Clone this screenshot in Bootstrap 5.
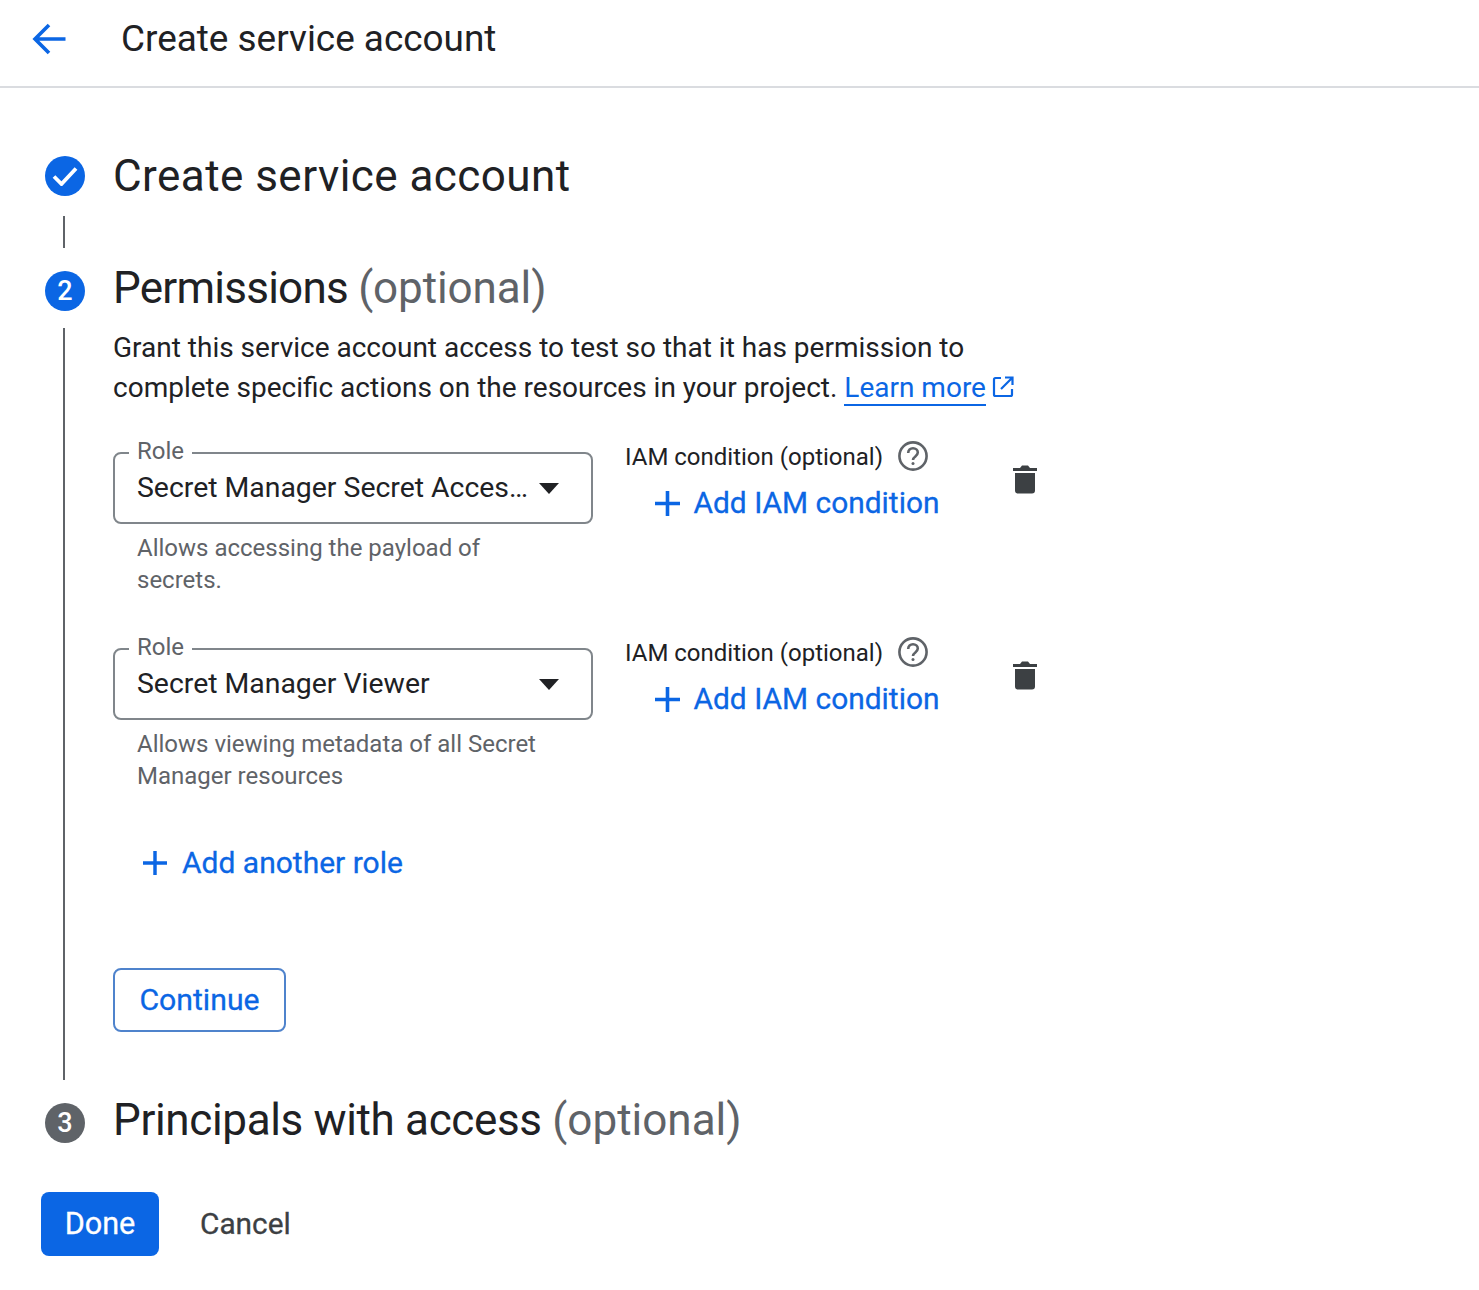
<!DOCTYPE html>
<html lang="en">
<head>
<meta charset="utf-8">
<title>Create service account</title>
<link href="https://cdn.jsdelivr.net/npm/bootstrap@5.3.0/dist/css/bootstrap.min.css" rel="stylesheet">
<style>
body{font-family:Roboto,"Liberation Sans",sans-serif;color:#202124;background:#fff;}
.topbar{height:88px;border-bottom:2px solid #dadce0;padding:0 0 8px 32px;}
.topbar-title{font-size:36.9px;margin-left:55px;line-height:1;}
.wrap{padding:68px 0 0 41px;}
.stepper{padding-left:4px;}
.dot{width:40px;height:40px;border-radius:50%;background:#0b66e4;color:#fff;font-size:27px;font-weight:500;flex:none;}
.dot-off{background:#5f6368;}
.step-h{font-size:44px;line-height:48px;margin:0 0 0 28px;font-weight:400;color:#202124;}
.step-h span{color:#5f6368;}
.sp-a{letter-spacing:.45px;}
.sp-b{letter-spacing:-.75px;margin-bottom:6px;}
.sp-b span{letter-spacing:-.1px;}
.sp-c{letter-spacing:-.35px;margin-bottom:6px;}
.sp-c span{letter-spacing:0;}
.step-row{height:40px;}
.link-a{width:2px;height:32px;background:#5f6368;margin:20px 0 23px 18px;}
.rail-line{width:2px;height:752px;background:#5f6368;margin:17px 48px 0 18px;flex:none;}
.step-body{width:940px;height:752px;margin-top:17px;}
.intro{font-size:28px;line-height:40px;margin:0;width:920px;}
.intro a{color:#0b66e4;text-decoration:none;border-bottom:2px solid #0b66e4;}
.ext-ic{margin-left:6px;vertical-align:-1px;}
.role-row{height:196px;}
.role-list{margin-top:44px;}
.field-col{width:480px;flex:none;}
.selbox{height:72px;border:2px solid #80868b;border-radius:8px;padding:0 32px 0 22px;font-size:28.4px;}
.selbox-lab{position:absolute;left:14px;top:-17px;background:#fff;padding:0 8px;font-size:24px;line-height:28px;color:#5f6368;}
.caret-s{width:0;height:0;border-left:10px solid transparent;border-right:10px solid transparent;border-top:11px solid #202124;flex:none;}
.sel-txt{white-space:nowrap;flex:1;}
.help{font-size:24px;line-height:32px;color:#5f6368;padding:8px 24px 0 24px;}
.iam-col{margin-left:32px;width:388px;flex:none;}
.iam-lab{font-size:24px;line-height:32px;margin-top:-11px;}
.q-ic{margin:0 0 2px 15px;}
.add-link{color:#0b66e4;font-size:29.9px;font-weight:400;-webkit-text-stroke:.3px #0b66e4;text-decoration:none;}
.add-iam{margin:8px 0 0 30px;gap:13.5px;}
.trash{margin-top:13px;margin-left:0;}
.add-role{margin:-4px 0 0 30px;gap:15px;font-size:30px;}
.btn-line{width:173px;height:64px;border:2px solid #4f83cc;border-radius:8px;color:#0b66e4;font-size:30.2px;background:#fff;margin-top:83px;padding:0;-webkit-text-stroke:.3px #0b66e4;}
.btn-line:hover{color:#0b66e4;border-color:#4f83cc;background:#fff;}
.step3{margin-top:23px;}
.actions{margin-top:49px;}
.btn-done{width:118px;height:64px;background:#0b66e4;border:0;border-radius:8px;color:#fff;font-size:30.6px;padding:0;-webkit-text-stroke:.3px #fff;}
.btn-done:hover{background:#0b66e4;color:#fff;}
.btn-cancel{font-size:29.8px;color:#3c4043;padding:0;margin-left:41px;border:0;-webkit-text-stroke:.3px #3c4043;}
.btn-cancel:hover{color:#3c4043;}
</style>
</head>
<body>
<header class="topbar d-flex align-items-center">
  <svg width="34" height="32" viewBox="0 0 34 32" fill="none" stroke="#0b66e4" stroke-width="3.6"><path d="M33.500 16H3.500M17 2 3 16l14 14"/></svg>
  <div class="topbar-title">Create service account</div>
</header>
<main class="wrap">
  <div class="stepper">
    <div class="step-row d-flex align-items-center">
      <div class="dot d-flex align-items-center justify-content-center">
        <svg width="26" height="20" viewBox="0 0 26 20" fill="none" stroke="#fff" stroke-width="3.8"><path d="M2 10.500l7.500 7.500L24 2.500"/></svg>
      </div>
      <h2 class="step-h sp-a">Create service account</h2>
    </div>
    <div class="link-a"></div>
    <div class="step-row d-flex align-items-center">
      <div class="dot d-flex align-items-center justify-content-center">2</div>
      <h2 class="step-h sp-b">Permissions <span>(optional)</span></h2>
    </div>
    <div class="d-flex">
      <div class="rail-line"></div>
      <div class="step-body">
        <p class="intro">Grant this service account access to test so that it has permission to complete specific actions on the resources in your project. <a href="#">Learn more</a><svg class="ext-ic" width="22" height="22" viewBox="0 0 22 22" fill="none" stroke="#0b66e4" stroke-width="2.200"><path d="M9 2H3.500a1.500 1.500 0 0 0-1.500 1.500v15A1.500 1.500 0 0 0 3.500 20h15a1.500 1.500 0 0 0 1.500-1.500V13M13 1.500h7.500V9M20.500 1.500 9 13"/></svg></p>
        <div class="role-list">
          <div class="role-row d-flex">
            <div class="field-col">
              <div class="selbox position-relative d-flex align-items-center">
                <span class="selbox-lab">Role</span>
                <span class="sel-txt">Secret Manager Secret Acces…</span>
                <span class="caret-s"></span>
              </div>
              <div class="help">Allows accessing the payload of secrets.</div>
            </div>
            <div class="iam-col">
              <div class="iam-lab d-flex align-items-center">IAM condition (optional)
                <svg class="q-ic" width="30" height="30" viewBox="0 0 30 30" fill="none" stroke="#5f6368" stroke-width="2.600"><circle cx="15" cy="15" r="13.600"/><path d="M10.200 12c0-3 2.200-4.800 4.800-4.800s4.800 1.800 4.800 4.400c0 3.800-4.800 3.800-4.800 7.400"/><circle cx="15" cy="22.600" r="1.500" fill="#5f6368" stroke="none"/></svg>
              </div>
              <a href="#" class="add-link add-iam d-flex align-items-center"><svg width="25" height="25" viewBox="0 0 25 25" fill="#0b66e4" stroke="none"><path d="M10.700 0h3.600v10.700H25v3.600H14.300V25h-3.600V14.300H0v-3.600h10.700z"/></svg>Add IAM condition</a>
            </div>
            <svg class="trash" width="24" height="29" viewBox="0 0 24 29" fill="#3c4043"><path d="M0 3h7l2-2.500h6L17 3h7v3H0zM2 8h20v17.500a3 3 0 0 1-3 3H5a3 3 0 0 1-3-3z"/></svg>
          </div>
          <div class="role-row d-flex">
            <div class="field-col">
              <div class="selbox position-relative d-flex align-items-center">
                <span class="selbox-lab">Role</span>
                <span class="sel-txt">Secret Manager Viewer</span>
                <span class="caret-s"></span>
              </div>
              <div class="help">Allows viewing metadata of all Secret Manager resources</div>
            </div>
            <div class="iam-col">
              <div class="iam-lab d-flex align-items-center">IAM condition (optional)
                <svg class="q-ic" width="30" height="30" viewBox="0 0 30 30" fill="none" stroke="#5f6368" stroke-width="2.600"><circle cx="15" cy="15" r="13.600"/><path d="M10.200 12c0-3 2.200-4.800 4.800-4.800s4.800 1.800 4.800 4.400c0 3.800-4.800 3.800-4.800 7.400"/><circle cx="15" cy="22.600" r="1.500" fill="#5f6368" stroke="none"/></svg>
              </div>
              <a href="#" class="add-link add-iam d-flex align-items-center"><svg width="25" height="25" viewBox="0 0 25 25" fill="#0b66e4" stroke="none"><path d="M10.700 0h3.600v10.700H25v3.600H14.300V25h-3.600V14.300H0v-3.600h10.700z"/></svg>Add IAM condition</a>
            </div>
            <svg class="trash" width="24" height="29" viewBox="0 0 24 29" fill="#3c4043"><path d="M0 3h7l2-2.500h6L17 3h7v3H0zM2 8h20v17.500a3 3 0 0 1-3 3H5a3 3 0 0 1-3-3z"/></svg>
          </div>
        </div>
        <a href="#" class="add-link add-role d-inline-flex align-items-center"><svg width="24" height="24" viewBox="0 0 25 25" fill="#0b66e4" stroke="none"><path d="M10.700 0h3.600v10.700H25v3.600H14.300V25h-3.600V14.300H0v-3.600h10.700z"/></svg>Add another role</a>
        <div><button type="button" class="btn btn-line">Continue</button></div>
      </div>
    </div>
    <div class="step-row step3 d-flex align-items-center">
      <div class="dot dot-off d-flex align-items-center justify-content-center">3</div>
      <h2 class="step-h sp-c">Principals with access <span>(optional)</span></h2>
    </div>
  </div>
  <div class="actions d-flex align-items-center">
    <button type="button" class="btn btn-done">Done</button>
    <button type="button" class="btn btn-cancel">Cancel</button>
  </div>
</main>
<script src="https://cdn.jsdelivr.net/npm/bootstrap@5.3.0/dist/js/bootstrap.bundle.min.js"></script>
</body>
</html>
